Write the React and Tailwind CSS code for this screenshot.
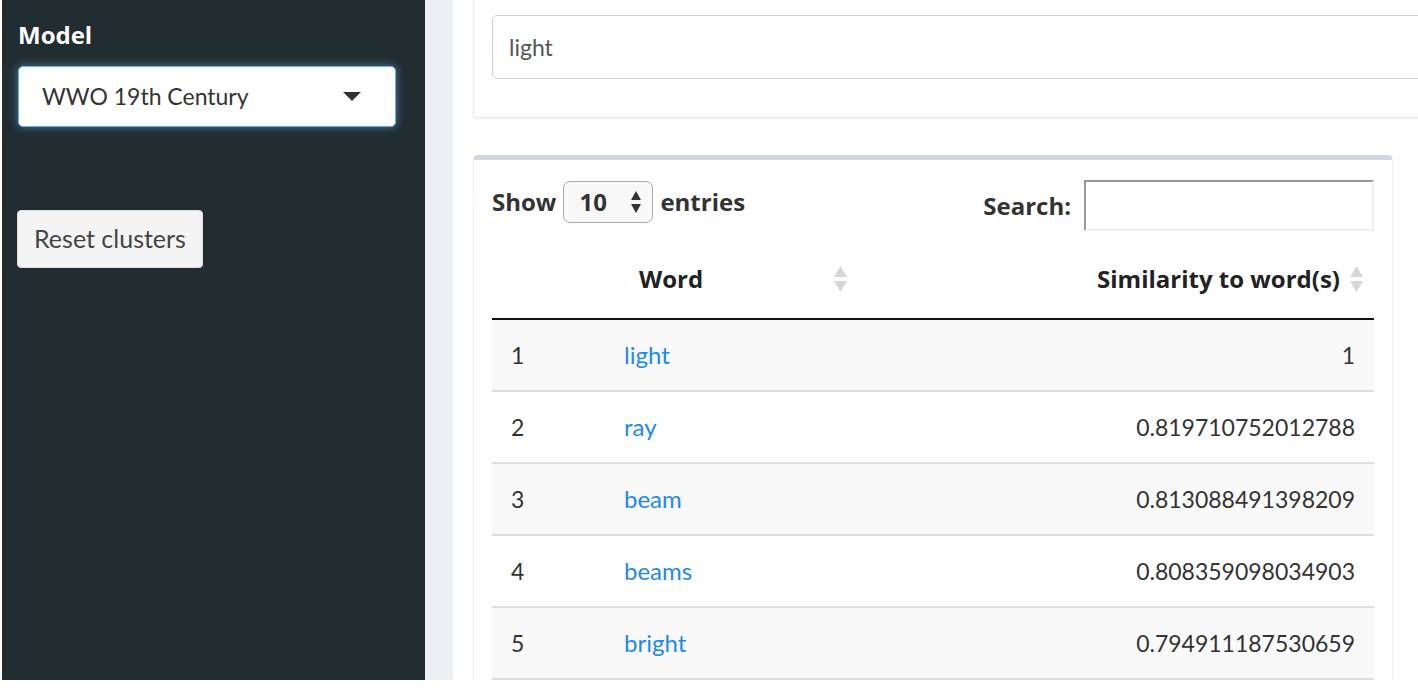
const rows = [
  { n: 1, word: "light", sim: "1" },
  { n: 2, word: "ray", sim: "0.819710752012788" },
  { n: 3, word: "beam", sim: "0.813088491398209" },
  { n: 4, word: "beams", sim: "0.808359098034903" },
  { n: 5, word: "bright", sim: "0.794911187530659" },
];

const bold = "font-['Open_Sans',sans-serif] font-bold";

function SortIcon() {
  return (
    <svg width="15" height="28" viewBox="0 0 15 28" className="shrink-0">
      <path d="M7.5 1 L14 12 L1 12 Z" fill="#d6d6d6" />
      <path d="M7.5 27 L14 16 L1 16 Z" fill="#d6d6d6" />
    </svg>
  );
}

function Sidebar() {
  return (
    <aside className="w-[423px] h-[680px] shrink-0 bg-[#222d32] px-[16px] pt-[18px]">
      <label className={`block text-white text-[24px] leading-[34px] ${bold}`}>Model</label>
      <div className="mt-[14px] h-[61px] w-[378px] rounded-[5px] bg-white border border-[#66afe9] shadow-[0_0_8px_rgba(102,175,233,0.6)] flex items-center justify-between pl-[23px] pr-[34px]">
        <span className="text-[23px] text-[#333]">WWO 19th Century</span>
        <svg width="18" height="9" viewBox="0 0 18 9">
          <path d="M0 0 L18 0 L9 9 Z" fill="#333" />
        </svg>
      </div>
      <button className="mt-[83px] -ml-[1px] h-[58px] px-[16px] rounded-[4px] bg-[#f4f4f4] border border-[#ddd] text-[25px] text-[#444]">
        Reset clusters
      </button>
    </aside>
  );
}

function ShowEntries() {
  return (
    <div className={`flex items-center gap-[7px] text-[24px] text-[#333] ${bold}`}>
      <span>Show</span>
      <div className="h-[42px] w-[90px] rounded-[7px] border border-[#aaa] bg-[#f8f8f8] flex items-center justify-between pl-[15px] pr-[11px]">
        <span className="text-[24px]">10</span>
        <svg width="10" height="24" viewBox="0 0 10 24">
          <path d="M5 1 L10 10 L0 10 Z" fill="#333" />
          <path d="M5 23 L10 14 L0 14 Z" fill="#333" />
        </svg>
      </div>
      <span>entries</span>
    </div>
  );
}

function DataTable() {
  return (
    <div className="px-[18px]">
      <div className="flex items-center justify-between pt-[12px]">
        <ShowEntries />
        <div className="flex items-center gap-[13px] pt-[8px]">
          <span className={`text-[24px] text-[#333] ${bold}`}>Search:</span>
          <div className="h-[51px] w-[290px] border-2 border-t-[#999] border-l-[#999] border-b-[#eee] border-r-[#eee] bg-white" />
        </div>
      </div>
      <table className="w-full mt-[8px] border-collapse text-[23px]">
        <thead>
          <tr className="border-b-2 border-[#111]">
            <th className="w-[114px] h-[80px]" />
            <th className={`w-[255px] text-left text-[#222] text-[24px] ${bold}`}>
              <div className="flex items-center justify-between pl-[33px] pr-[13px]">
                <span>Word</span>
                <SortIcon />
              </div>
            </th>
            <th className={`text-right text-[#222] text-[24px] ${bold}`}>
              <div className="flex items-center justify-end gap-[9px] pr-[10px]">
                <span>Similarity to word(s)</span>
                <SortIcon />
              </div>
            </th>
          </tr>
        </thead>
        <tbody>
          {rows.map((r) => (
            <tr key={r.n} className={`h-[72px] border-b-2 border-[#ddd] ${r.n % 2 ? "bg-[#f9f9f9]" : "bg-white"}`}>
              <td className="pl-[19px] text-[#333]">{r.n}</td>
              <td className="pl-[18px] text-[24px]">
                <a className="text-[#1f87f0]">{r.word}</a>
              </td>
              <td className="text-right pr-[19px] text-[#333]">{r.sim}</td>
            </tr>
          ))}
        </tbody>
      </table>
    </div>
  );
}

export default function App() {
  return (
    <div className="w-[1418px] h-[700px] bg-white overflow-hidden font-['Lato',sans-serif]">
      <div className="flex h-[680px] pl-[2px]">
        <Sidebar />
        <div className="w-[28px] shrink-0 bg-[#ecf0f5]" />
        <main className="flex-1 bg-white pl-[20px] overflow-hidden">
          <div className="w-[1000px] h-[118px] rounded-b-[4px] border border-t-0 border-[#e4e7eb] shadow-[0_1px_2px_rgba(0,0,0,0.06)] pt-[15px] pl-[18px]">
            <div className="h-[64px] rounded-[5px] border border-[#ccd0d6] bg-white flex items-center pl-[16px] text-[23px] text-[#555]">
              light
            </div>
          </div>
          <section className="mt-[37px] w-[920px] h-[526px] rounded-t-[5px] border-t-[5px] border-t-[#d2d6de] border-x border-x-[#eceef1] bg-white">
            <DataTable />
          </section>
        </main>
      </div>
    </div>
  );
}
